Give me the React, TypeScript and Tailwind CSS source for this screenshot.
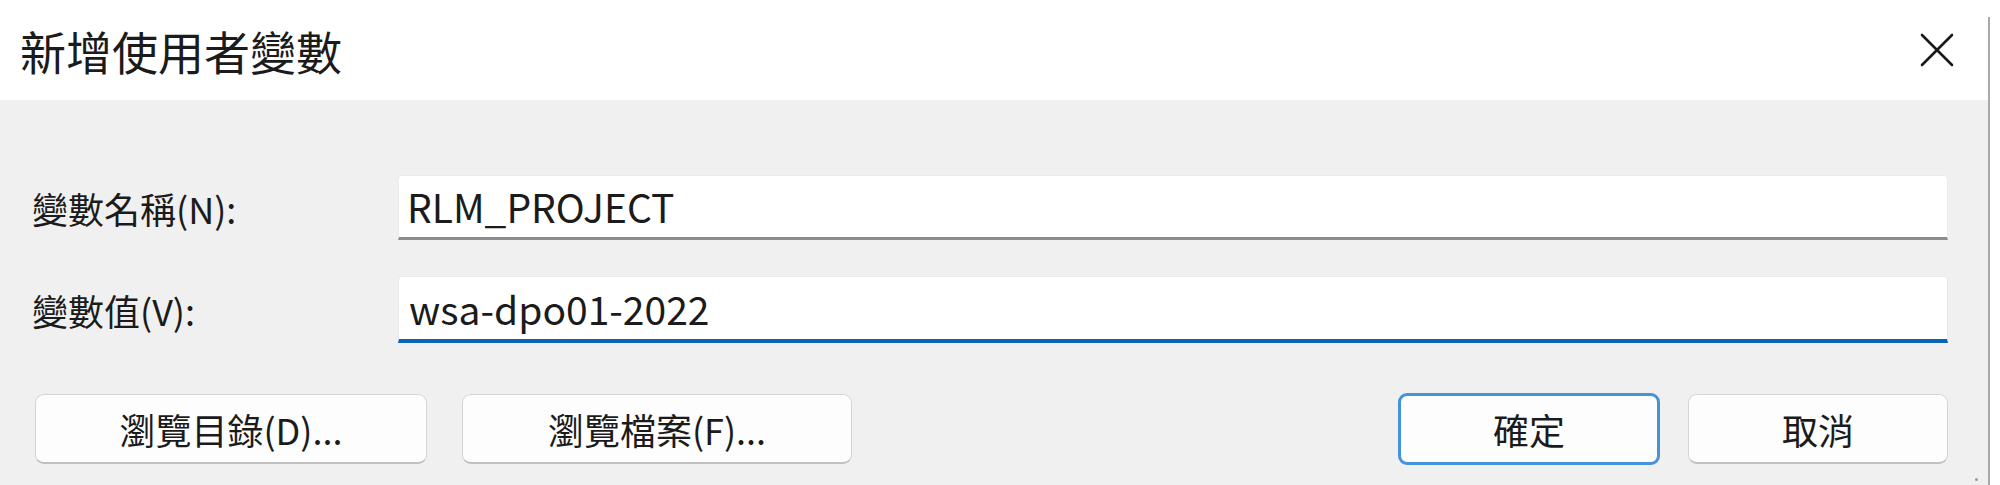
const font = { fontFamily: '"Noto Sans CJK TC", "Noto Sans", sans-serif' };

function CloseIcon() {
  return (
    <svg width="34" height="34" viewBox="0 0 34 34" className="text-[#1a1a1a]">
      <path d="M2 2 L32 32 M32 2 L2 32" stroke="currentColor" strokeWidth="2.6" strokeLinecap="round" />
    </svg>
  );
}

function Field({ label, value, focused }: { label: string; value: string; focused?: boolean }) {
  return (
    <div className="flex items-center">
      <div className="w-[366px] text-[36px] leading-none">{label}</div>
      <div
        className={
          focused
            ? 'flex h-[67px] flex-1 items-center rounded-t-[4px] border border-b-[4px] border-[#e6e9ee] border-b-[#0a62b9] bg-white pl-[10px]'
            : 'flex h-[65px] flex-1 items-center rounded-t-[4px] border border-b-[3px] border-[#ebebeb] border-b-[#8c8c8c] bg-white pl-[8px]'
        }
      >
        <span className="text-[39px] leading-none">{value}</span>
      </div>
    </div>
  );
}

export default function App() {
  return (
    <div className="flex h-[485px] w-[2000px] overflow-hidden bg-white text-[#1b1b1b]" style={font}>
      <div className="flex w-[1988px] flex-col">
        <div className="flex h-[100px] shrink-0 items-center justify-between bg-white pl-[20px] pr-[34px]">
          <span className="text-[46px] leading-none">新增使用者變數</span>
          <CloseIcon />
        </div>

        <div className="relative flex flex-1 flex-col bg-[#f0f0f0] pl-[32px] pr-[40px] pt-[75px]">
          <Field label="變數名稱(N):" value="RLM_PROJECT" />
          <div className="h-[36px]" />
          <Field label="變數值(V):" value="wsa-dpo01-2022" focused />

          <div className="mt-[50px] flex items-center">
            <button className="ml-[3px] flex h-[70px] w-[392px] items-center justify-center rounded-[9px] border border-b-2 border-[#d4d4d4] border-b-[#c0c0c0] bg-[#fdfdfd] text-[36px] leading-none">
              瀏覽目錄(D)...
            </button>
            <button className="ml-[35px] flex h-[70px] w-[390px] items-center justify-center rounded-[9px] border border-b-2 border-[#d4d4d4] border-b-[#c0c0c0] bg-[#fdfdfd] text-[36px] leading-none">
              瀏覽檔案(F)...
            </button>
            <div className="flex-1" />
            <button className="flex h-[72px] w-[262px] items-center justify-center rounded-[9px] border-[3px] border-[#4593dc] bg-[#fdfdfd] text-[36px] leading-none">
              確定
            </button>
            <button className="ml-[28px] flex h-[70px] w-[260px] items-center justify-center rounded-[9px] border border-b-2 border-[#d4d4d4] border-b-[#c0c0c0] bg-[#fdfdfd] text-[36px] leading-none">
              取消
            </button>
          </div>

          <div className="absolute bottom-[4px] right-[10px] h-[3px] w-[3px] rounded-full bg-[#9a9a9a]" />
        </div>
      </div>

      <div className="flex w-[12px] flex-col bg-white">
        <div className="mt-[17px] w-[2px] flex-1 bg-[#a9a9a9]" />
      </div>
    </div>
  );
}
